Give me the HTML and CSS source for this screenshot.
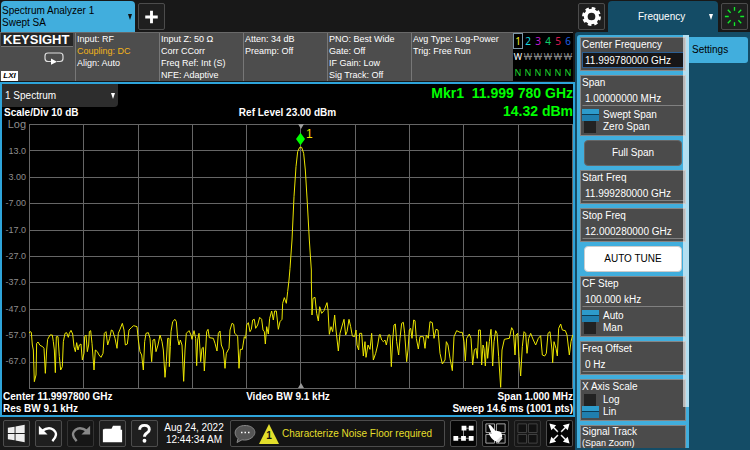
FILE: index.html
```
<!DOCTYPE html>
<html lang="en">
<head>
<meta charset="utf-8">
<title>Spectrum Analyzer</title>
<link rel="stylesheet" href="styles.css">
</head>
<body>
<div class="app">
  <main class="screen">
    <header class="tabs">
      <button class="mode-tab"><span>Spectrum Analyzer 1<br>Swept SA</span><i class="arrow"></i></button>
      <button class="tile" aria-label="Add screen">
        <svg viewBox="0 0 26 26"><path d="M13 7v13M6.500 13.500h13" stroke="#fff" stroke-width="3"/></svg>
      </button>
    </header>

    <section class="status">
      <div class="brand">
        <strong class="logo">KEYSIGHT</strong>
        <svg class="sweep" viewBox="0 0 22 14"><path d="M8 10.500H5q-3 0-3-3V5q0-3 3-3h12q3 0 3 3v2.500q0 3-3 3h-3" fill="none" stroke="#ddd" stroke-width="1.200"/><path d="M8 7.500l6 3.200-6 3z" fill="#fff"/></svg>
        <em class="lxi">LXI</em>
      </div>
      <div class="cell">Input: RF<br><span class="warn">Coupling: DC</span><br>Align: Auto</div>
      <div class="cell">Input Z: 50 Ω<br>Corr CCorr<br>Freq Ref: Int (S)<br>NFE: Adaptive</div>
      <div class="cell">Atten: 34 dB<br>Preamp: Off</div>
      <div class="cell">PNO: Best Wide<br>Gate: Off<br>IF Gain: Low<br>Sig Track: Off</div>
      <div class="cell">Avg Type: Log-Power<br>Trig: Free Run</div>
      <table class="traces">
        <tr class="nums"><td class="t1">1</td><td class="t2">2</td><td class="t3">3</td><td class="t4">4</td><td class="t5">5</td><td class="t6">6</td></tr>
        <tr class="types"><td class="on">W</td><td>W</td><td>W</td><td>W</td><td>W</td><td>W</td></tr>
        <tr class="dets"><td>N</td><td>N</td><td>N</td><td>N</td><td>N</td><td>N</td></tr>
      </table>
    </section>

    <section class="window">
      <div class="window-head">
        <div class="view">
          <select aria-label="View"><option>1 Spectrum</option></select><i class="arrow light"></i>
        </div>
        <b class="scale">Scale/Div 10 dB</b>
        <b class="ref">Ref Level 23.00 dBm</b>
        <b class="readout">Mkr1 &nbsp;11.999 780 GHz<br>14.32 dBm</b>
      </div>
      <div class="plot">
        <div class="axis">
          <span class="log">Log</span><span>13.0</span><span>3.00</span><span>-7.00</span><span>-17.0</span><span>-27.0</span><span>-37.0</span><span>-47.0</span><span>-57.0</span><span>-67.0</span><span></span>
        </div>
        <div class="chart">
          <div class="grid"></div>
          <svg class="trace" viewBox="87 -438 1632 792" preserveAspectRatio="none">
            <polyline points="87,190 90,185 94,187 97,225 100,240 103,335 108,315 110,220 114,216 120,226 128,230 132,235 136,310 140,240 143,208 150,195 157,195 160,215 163,240 166,308 169,200 174,200 178,260 182,300 187,290 190,215 195,190 200,188 205,202 208,190 213,181 218,192 222,230 226,245 230,218 234,240 238,225 243,222 247,270 252,250 254,200 258,195 262,245 266,225 268,185 272,182 276,220 282,300 286,240 292,245 297,255 303,262 309,250 313,190 318,185 323,225 329,205 334,180 338,182 345,205 351,235 355,190 360,178 367,160 372,180 376,225 382,222 387,180 395,172 401,167 411,170 415,210 420,245 425,255 430,300 434,215 438,190 445,188 450,205 455,275 459,210 464,208 468,245 474,225 480,195 486,215 490,240 495,322 499,275 503,205 507,205 508,290 511,230 513,185 518,155 525,148 529,155 533,205 537,225 541,210 546,225 551,334 555,240 559,190 567,182 573,195 576,208 582,182 587,205 590,287 593,210 597,190 602,275"/>
            <polyline points="602,275 606,235 610,232 613,303 617,240 620,185 624,178 628,203 640,205 645,220 651,243 655,190 660,183 664,225 670,240 675,295 679,250 687,235 690,180 696,160 701,163 704,190 710,195 713,200 717,295 721,238 727,238 733,200 737,205 740,165 745,158 750,185 754,178 758,150 763,148 767,175 773,165 779,142 785,148 789,180 793,185 796,222 800,170 805,192 809,145 815,123 820,150 824,123 829,123 835,178 840,155 846,148 848,100 853,83 859,100 863,65 867,30 870,-5 876,-90 882,-220 888,-310 893,-355 899,-368 905,-368 911,-350 916,-300 922,-200 928,-90 934,0 934,30 936,135 939,85 945,82 950,130 955,153 959,110 965,130 972,122 981,98 984,120 988,193 993,170 998,185 1004,135 1008,180 1015,243 1020,190 1027,165 1032,148 1037,195 1041,185 1047,148 1052,170 1057,198 1064,200 1068,180 1071,225 1076,240 1079,190 1085,190 1090,258 1095,215 1098,262 1104,225 1110,238 1115,190 1120,270 1127,250 1133,225 1138,195"/>
            <polyline transform="translate(1140)" points="-2,195 0,193 5,210 10,215 15,210 19,225 25,195 30,195 34,290 38,210 42,165 46,162 50,215 56,255 60,205 65,160 70,157 74,190 80,275 84,240 88,180 92,175 96,205 101,150 105,152 109,205 115,237 120,200 130,200 135,235 139,195 145,205 150,155 157,158 162,205 168,178 174,180 180,250 187,282 195,270 199,215 204,225 210,265 217,302 222,200 230,182 240,187 247,187 252,215 256,273 260,205 268,192 273,205 278,285 283,240 288,235 292,265 296,180 301,180 305,285 309,225 312,235 316,288 320,215 323,265 328,215 333,178 338,288 342,215 347,182 351,190 356,260 362,352 366,240 373,208 388,205 395,173 400,182 405,255 408,195 413,190 417,260 422,318 427,230 432,185 437,190 441,250 446,205 452,190 460,210 467,225 475,205 482,197 487,255 494,258 499,250 504,190 510,185 516,240 518,278 522,215 528,235 532,258 536,175 542,162 547,180 556,182 561,195 568,255 573,215 578,195"/>
          </svg>
          <i class="center-top"></i><i class="center-bottom"></i>
          <div class="marker"><svg viewBox="0 0 10 14"><path d="M5 0l5 7-5 7-5-7z" fill="#0f0"/></svg><span>1</span></div>
        </div>
      </div>
      <div class="window-foot">
        <b>Center 11.9997800 GHz<br>Res BW 9.1 kHz</b>
        <b>Video BW 9.1 kHz</b>
        <b class="end">Span 1.000 MHz<br>Sweep 14.6 ms (1001 pts)</b>
      </div>
    </section>

    <footer class="toolbar">
      <button class="tile" aria-label="Start"><svg viewBox="0 0 26 26"><path d="M4 7l7-1v6.500H4zM12 5.800L21.500 4v8.500H12zM4 13.500h7V20l-7-1zM12 13.500h9.500V22L12 20.200z" fill="#eee"/></svg></button>
      <button class="tile" aria-label="Undo"><svg viewBox="0 0 26 26"><path d="M6 10.500q7-5 12-1.500 6 5-1 12" fill="none" stroke="#fff" stroke-width="2.500"/><path d="M3 5v9h9z" fill="#fff"/></svg></button>
      <button class="tile dim" aria-label="Redo"><svg viewBox="0 0 26 26"><path d="M20 10.500q-7-5-12-1.500-6 5 1 12" fill="none" stroke="#888" stroke-width="2.500"/><path d="M23 5v9h-9z" fill="#888"/></svg></button>
      <button class="tile" aria-label="Files"><svg viewBox="0 0 26 26"><path d="M3 8.500h1.500V8H12l1.500-3h8v4H23v13H3z" fill="#fff"/></svg></button>
      <button class="tile" aria-label="Help"><svg viewBox="0 0 26 26"><path d="M8 9q0-4.500 5-4.500t5 4.300q0 2.200-2.500 3.700-2.500 1.500-2.500 4" fill="none" stroke="#fff" stroke-width="3"/><circle cx="13" cy="20.500" r="2" fill="#fff"/></svg></button>
      <time class="clock">Aug 24, 2022<br>12:44:34 AM</time>
      <button class="message">
        <svg class="bubble" viewBox="0 0 22 20"><path d="M4 14.500C-2 9 2 1.500 11 1.500s13 7 7 12c-3 2.500-7 3-10 2.300L3 18.500z" fill="#555" stroke="#888"/><path d="M7 8.500h1.500M10.500 8.500H12M14 8.500h1.500" stroke="#fff" stroke-width="1.300"/></svg>
        <span class="alert"><svg viewBox="0 0 20 20"><path d="M10 0l10 20H0z" fill="#e3df2b"/></svg><b>1</b></span>
        <span>Characterize Noise Floor required</span>
      </button>
      <button class="tile black" aria-label="Sequence"><svg viewBox="0 0 26 26"><path d="M4 18h18M13 7.500h8M13 7.500V18" stroke="#999"/><path d="M11 5h5v5h-5zM18.500 5h5v5h-5zM2.500 15.500h5v5h-5zM10.500 15.500h5v5h-5zM18.500 15.500h5v5h-5z" fill="#fff"/></svg></button>
      <button class="tile black" aria-label="Touch"><svg viewBox="0 0 26 26"><path d="M3 3h9v9H3zM14 3h9v9h-9zM3 14h9v9H3zM14 14h9v9h-9z" fill="#0a0a0a" stroke="#aaa"/><path d="M5.500 4.500q2-1.500 3.500 1l3.500 4.500 5 1q2 .5 2.500 5l-5 5.500q-5-1-8-6.500l-1-2.500 3 .5z" fill="#fff"/><path d="M13.500 21l5-5 2 2-4.500 5z" fill="#ddd"/></svg></button>
      <button class="tile dim" aria-label="Layout"><svg viewBox="0 0 26 26"><path d="M3 3h9v9H3zM14 3h9v9h-9zM3 14h9v9H3zM14 14h9v9h-9z" fill="#111" stroke="#444"/></svg></button>
      <button class="tile black" aria-label="Full screen"><svg viewBox="0 0 26 26"><path d="M5 5l16 16M21 5L5 21" stroke="#fff" stroke-width="1.500"/><circle cx="13" cy="13" r="2.500" fill="#000"/><path d="M2.500 2.500l7 2-5 5zM23.500 2.500l-2 7-5-5zM2.500 23.500l2-7 5 5zM23.500 23.500l-7-2 5-5z" fill="#fff"/></svg></button>
    </footer>
  </main>

  <aside class="side">
    <div class="side-tabs">
      <button class="tile" aria-label="Settings menu"><svg viewBox="0 0 26 26"><circle cx="13" cy="13" r="6" fill="none" stroke="#fff" stroke-width="4"/><circle cx="13" cy="13" r="8.300" fill="none" stroke="#fff" stroke-width="3" stroke-dasharray="3.600 2.920"/></svg></button>
      <button class="menu-tab"><span>Frequency</span><i class="arrow light"></i></button>
      <button class="tile" aria-label="Busy"><svg viewBox="0 0 26 26"><path d="M13 3v5M13 18v5M3 13h5M18 13h5M6 6l3.500 3.500M16.500 16.500L20 20M20 6l-3.500 3.500M9.500 16.500L6 20" stroke="#0e2d1c" stroke-width="2.500"/><path d="M13 3v4M13 19v4M3 13h4M19 13h4M6 6l3 3M17 17l3 3M20 6l-3 3M9 17l-3 3" stroke="#1be52a" stroke-width="1.400"/></svg></button>
    </div>
    <div class="panel">
      <div class="controls">
        <div class="group"><label for="cf">Center Frequency</label><input class="field active" id="cf" value="11.999780000 GHz"></div>
        <div class="group"><label for="sp">Span</label><input class="field" id="sp" value="1.00000000 MHz">
          <div class="choices"><label><input type="radio" name="span" checked><span>Swept Span</span></label><label><input type="radio" name="span"><span>Zero Span</span></label></div></div>
        <button class="action">Full Span</button>
        <div class="group"><label for="st">Start Freq</label><input class="field" id="st" value="11.999280000 GHz"></div>
        <div class="group"><label for="en">Stop Freq</label><input class="field" id="en" value="12.000280000 GHz"></div>
        <button class="action bright">AUTO TUNE</button>
        <div class="group"><label for="cs">CF Step</label><input class="field" id="cs" value="100.000 kHz">
          <div class="choices"><label><input type="radio" name="step" checked><span>Auto</span></label><label><input type="radio" name="step"><span>Man</span></label></div></div>
        <div class="group"><label for="fo">Freq Offset</label><input class="field" id="fo" value="0 Hz"></div>
        <div class="group"><span class="title">X Axis Scale</span>
          <div class="choices plain"><label><input type="radio" name="axis"><span>Log</span></label><label><input type="radio" name="axis" checked><span>Lin</span></label></div></div>
        <div class="group last"><span class="title">Signal Track</span><span class="note">(Span Zoom)</span></div>
        <i class="scrollbar"></i>
      </div>
      <button class="settings">Settings</button>
    </div>
  </aside>
</div>
</body>
</html>
```
FILE: styles.css
```
* { box-sizing: border-box; }

body {
  margin: 0;
  background: #181818;
  color: #fff;
  font: 10px/12px "Liberation Sans", Arial, sans-serif;
}

button, input, select {
  margin: 0;
  padding: 0;
  border: 0;
  border-radius: 0;
  background: none;
  color: inherit;
  font: inherit;
}

button svg { display: block; width: 100%; height: 100%; }

.app {
  display: grid;
  grid-template-columns: minmax(0, 1fr) 175px;
  grid-template-rows: minmax(0, 1fr);
  height: 100vh;
}

.screen {
  display: grid;
  grid-template-rows: 32px 50px minmax(0, 1fr) 33px;
  min-width: 0;
}

.arrow {
  width: 0;
  height: 0;
  border: 2px solid transparent;
  border-top: 6px solid #111;
  border-bottom: 0;
}
.arrow.light { border-top-color: #fff; }

.tile {
  flex: none;
  width: 27px;
  height: 27px;
  border: 1px solid #4c4c4c;
  border-radius: 2px;
  background: #1f1f1f;
}
.tile.black { background: #050505; }
.tile.dim { border-color: #333; background: #161616; }

/* Screen tabs */
.tabs { display: flex; gap: 3px; padding: 1px 1px 0; }
.tabs .tile { margin-top: 2px; }

.mode-tab {
  display: flex;
  align-items: center;
  justify-content: space-between;
  width: 134px;
  padding: 0 3px 0 1px;
  border-radius: 4px 4px 0 0;
  background: #41aedd;
  color: #000;
  text-align: left;
}

/* Measurement status bar */
.status {
  display: grid;
  grid-template-columns: 75fr 84fr 84fr 84fr 84fr 102fr 60fr;
  margin: 0 2px 1px 0;
  border-top: 1px solid #696969;
  background: #4d4d4d;
  font-size: 9px;
}

.cell {
  padding-left: 1px;
  border-left: 1px solid #777;
  white-space: nowrap;
}
.warn { color: #f2b31a; }

.brand {
  display: grid;
  grid-template-rows: 14px 1fr 10px;
  padding-left: 1px;
}
.logo {
  margin-right: 2px;
  padding-left: 2px;
  background: #262626;
  border-bottom: 1px solid #777;
  font-size: 13px;
  line-height: 14px;
}
.sweep { width: 22px; height: 14px; margin: 4px 0 0 42px; }
.lxi {
  width: 17px;
  background: #fff;
  color: #000;
  font-size: 8px;
  font-weight: bold;
  line-height: 10px;
  text-align: center;
}

.traces {
  width: 100%;
  height: 100%;
  table-layout: fixed;
  border-collapse: collapse;
  background: #000;
  font: 10px/14px "Noto Sans", sans-serif;
  text-align: center;
}
.traces td { padding: 0; }
.traces .t1 { color: #f5ee28; outline: 1px solid #7d97a8; outline-offset: -1px; }
.t2 { color: #16d9e0; }
.t3 { color: #c51bd0; }
.t4 { color: #0fcf6c; }
.t5 { color: #d91a50; }
.t6 { color: #1f5fe0; }
.types, .dets { font-size: 9px; }
.types td { color: #888; text-decoration: line-through; }
.types .on { color: #fff; text-decoration: none; }
.dets { color: #1fd02c; }

/* Measurement window */
.window {
  display: grid;
  grid-template-rows: auto minmax(0, 1fr) auto;
  border: 2px solid #2ea4da;
  background: #000;
}

.window-head {
  display: grid;
  grid-template-columns: 1fr auto 1fr;
  grid-template-rows: 23px 12px;
  padding-bottom: 5px;
}
.view {
  display: flex;
  align-items: center;
  width: 116px;
  padding-right: 3px;
  border-radius: 0 0 4px 0;
  background: #2d2d2d;
}
.view select { flex: 1; height: 23px; padding-left: 3px; appearance: none; }
.scale { grid-area: 2 / 1; padding-left: 2px; }
.ref { grid-area: 2 / 2; }
.readout {
  grid-area: 1 / 3 / 3 / 4;
  justify-self: end;
  color: #0f0;
  font-size: 14px;
  line-height: 18px;
  text-align: right;
  white-space: nowrap;
}

.plot { display: grid; grid-template-columns: 27px minmax(0, 1fr); }
.axis {
  display: grid;
  grid-template-rows: repeat(11, 1fr);
  align-items: center;
  margin: -13px 0;
  padding-right: 3px;
  color: #8e8e8e;
  font-size: 9px;
  text-align: right;
}
.axis .log { font-size: 11px; }

.chart { position: relative; }
.grid {
  position: absolute;
  inset: 0 0 -1px;
  background:
    repeating-linear-gradient(90deg, #666 0 1px, transparent 1px 10%),
    repeating-linear-gradient(#666 0 1px, transparent 1px 10%);
  border-right: 1px solid #666;
  border-bottom: 1px solid #666;
}
.trace { position: absolute; width: 100%; height: 100%; }
.trace polyline {
  fill: none;
  stroke: #ece600;
  stroke-width: 1;
  stroke-linejoin: round;
  vector-effect: non-scaling-stroke;
}
.center-top, .center-bottom {
  position: absolute;
  left: calc(50% - 3px);
  border: 3px solid transparent;
}
.center-top { top: 0; border-top: 5px solid #999; border-bottom: 0; }
.center-bottom { bottom: 0; border-bottom: 5px solid #999; border-top: 0; }

.marker {
  position: absolute;
  top: 4px;
  left: calc(50% - 5px);
  display: flex;
  gap: 1px;
  color: #e8e200;
  font-size: 12px;
}
.marker svg { width: 9px; height: 14px; margin-top: 4px; }

.window-foot {
  display: grid;
  grid-template-columns: 1fr auto 1fr;
  padding: 3px 0 0 1px;
}
.window-foot .end { text-align: right; }

/* Bottom toolbar */
.toolbar {
  display: flex;
  align-items: center;
  gap: 5px;
  padding: 0 2px 0 3px;
}
.clock { flex: none; width: 62px; text-align: center; white-space: nowrap; }
.message {
  display: flex;
  flex: 1;
  align-items: center;
  gap: 3px;
  height: 27px;
  padding: 0 3px;
  border: 1px solid #4c4c4c;
  border-radius: 2px;
  background: #141414;
  color: #e3df2b;
  white-space: nowrap;
}
.message .bubble { width: 22px; height: 20px; }
.alert { position: relative; width: 20px; height: 20px; }
.alert b { position: absolute; inset: 6px 0 0; color: #111; text-align: center; }

/* Side menu */
.side { display: grid; grid-template-rows: 32px minmax(0, 1fr); }
.side-tabs {
  display: flex;
  gap: 3px;
  padding: 1px 2px 0 3px;
}
.side-tabs .tile { margin-top: 2px; }
.menu-tab {
  display: flex;
  flex: 1;
  align-items: center;
  justify-content: space-between;
  padding: 0 5px 0 30px;
  border-radius: 4px 4px 0 0;
  background: #144c66;
}

.panel {
  display: flex;
  align-items: flex-start;
  min-height: 0;
  padding: 3px 2px 2px;
  border-radius: 3px 0 0;
  background: #144c66;
}
.controls {
  position: relative;
  display: flex;
  flex: none;
  flex-direction: column;
  gap: 4px;
  width: 112px;
  height: 100%;
  padding: 2px 3px 0;
  overflow: hidden;
  border-radius: 3px 0 0;
  background: #41aedd;
}
.group {
  display: flex;
  flex: none;
  flex-direction: column;
  padding: 0 1px 2px;
  border: 1px solid #858585;
  background: #4b4b4b;
}
.group.last { padding-bottom: 0; border-bottom: 0; }
.group > label, .title { line-height: 14px; }
.last .title { line-height: 12px; }
.note { font-size: 9px; line-height: 10px; }
.field {
  width: 100%;
  height: 16px;
  padding: 0 2px;
  border: 1px solid transparent;
  border-bottom-color: #808080;
}
.field.active { border-color: #2c5f94; background: #161618; }

.choices { display: flex; flex-direction: column; padding: 3px 0 0; }
.choices.plain { padding: 0; }
.choices label { display: flex; align-items: center; gap: 4px; }
.choices input {
  width: 17px;
  height: 12px;
  appearance: none;
  border: 0 solid #4b4b4b;
  border-width: 0 3px 0 2px;
  background: #222;
}
.choices input:checked {
  border: 0;
  background: linear-gradient(#2d9bcb 0 5px, #0c3c55 5px 6px, #207fae 6px);
}

.action {
  flex: none;
  height: 26px;
  margin: 0 4px;
  border: 1px solid #666;
  border-radius: 4px;
  background: #4b4b4b;
}
.action.bright { border-color: #ccc; background: #fff; color: #000; }

.scrollbar {
  position: absolute;
  top: 0;
  right: 0;
  width: 6px;
  height: 90%;
  background: rgba(255, 255, 255, .6);
}

.settings {
  flex: 1;
  height: 26px;
  margin-top: 2px;
  padding-left: 3px;
  border-radius: 0 3px 3px 0;
  background: #41aedd;
  color: #000;
  text-align: left;
}
```
